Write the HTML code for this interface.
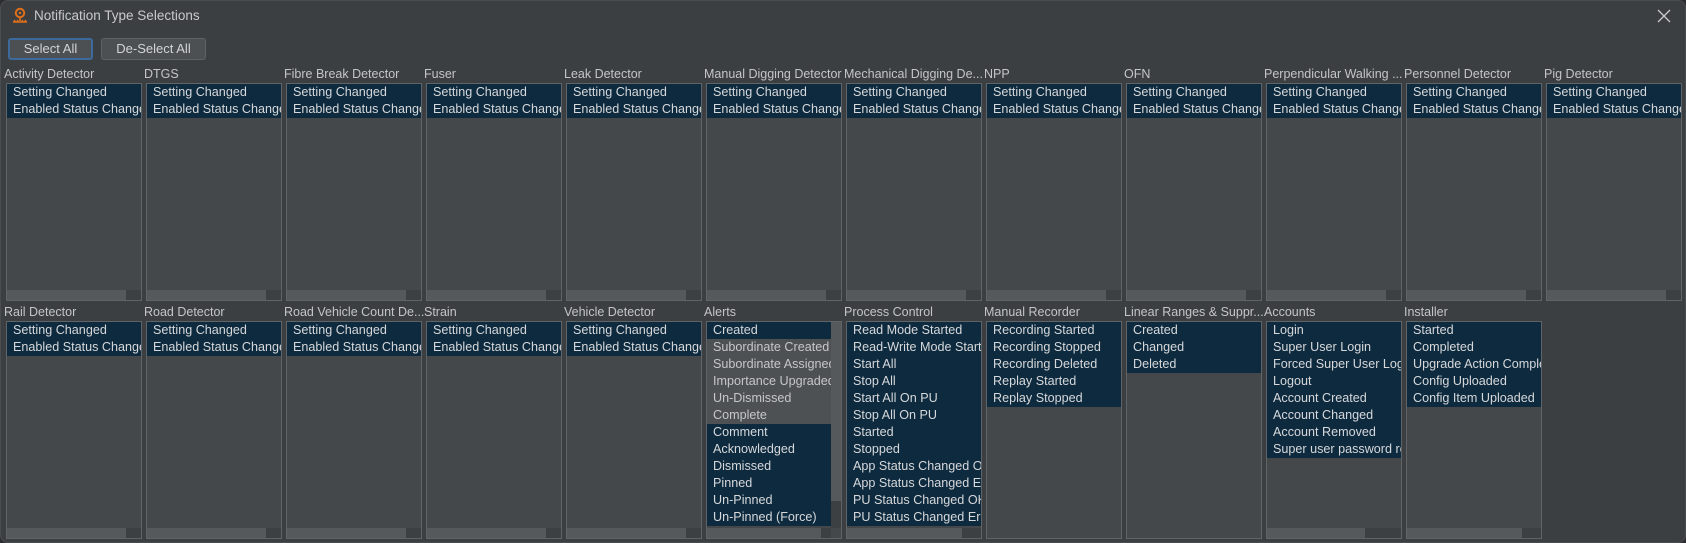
<!DOCTYPE html>
<html><head><meta charset="utf-8"><style>
*{margin:0;padding:0;box-sizing:border-box}
body{width:1686px;height:543px;background:#2b2d30;overflow:hidden;font-family:"Liberation Sans",sans-serif;}
.win{position:absolute;left:0;top:0;width:1686px;height:543px;background:#3c3f41;border:1px solid #4a4d50;border-radius:8px;overflow:hidden}
.title{position:absolute;left:33px;top:7px;font-size:13.5px;color:#c8cacc}
.x{position:absolute;left:1654px;top:6px;width:18px;height:18px}
.btn{position:absolute;top:37px;height:22px;border:1px solid #5e6265;border-radius:3px;background:#4c5052;color:#d2d4d6;font-size:13px;text-align:center;line-height:20px}
.btn.f{border:2px solid #3d6a9c;line-height:18px}
.l{position:absolute;width:142px;font-size:12.5px;color:#c3c5c7;white-space:nowrap;overflow:hidden;text-overflow:ellipsis;height:16px;line-height:16px}
.b{position:absolute;width:136px;height:218px;border:1px solid #616467;background:#45484b;overflow:hidden}
.it{height:17px;line-height:17px;font-size:12.6px;color:#d6d8da;padding-left:6px;white-space:nowrap;background:#0e2a3f;overflow:hidden}
.it.u{background:#4e5154;color:#c5c7c9}
.hs{position:absolute;left:0;bottom:0;height:10px;background:#3d4042;width:100%}
.hs i{display:block;height:10px;background:#55595c}
.vs{position:absolute;right:0;top:0;width:10px;height:206px;background:#3d4042}
.vs i{display:block;width:10px;background:#55595c;height:179px}
</style></head><body><div class="win">
<svg style="position:absolute;left:10px;top:6px" width="18" height="18" viewBox="0 0 18 18"><circle cx="9" cy="6" r="4.2" fill="none" stroke="#e0701a" stroke-width="2"/><circle cx="9" cy="6" r="1.2" fill="#e0701a"/><path d="M9 10v4M2 15h14M3 15l1-2M15 15l-1-2M6 15l1-2M12 15l-1-2" stroke="#e0701a" stroke-width="1.6" fill="none"/></svg>
<div class="title">Notification Type Selections</div>
<svg class="x" viewBox="0 0 18 18"><path d="M3 3L15 15M15 3L3 15" stroke="#c8cacc" stroke-width="1.3"/></svg>
<div class="btn f" style="left:7px;width:85px">Select All</div>
<div class="btn" style="left:100px;width:105px">De-Select All</div>

<div class="l" style="left:3px;top:65px">Activity Detector</div>
<div class="l" style="left:143px;top:65px">DTGS</div>
<div class="l" style="left:283px;top:65px">Fibre Break Detector</div>
<div class="l" style="left:423px;top:65px">Fuser</div>
<div class="l" style="left:563px;top:65px">Leak Detector</div>
<div class="l" style="left:703px;top:65px">Manual Digging Detector</div>
<div class="l" style="left:843px;top:65px">Mechanical Digging De...</div>
<div class="l" style="left:983px;top:65px">NPP</div>
<div class="l" style="left:1123px;top:65px">OFN</div>
<div class="l" style="left:1263px;top:65px">Perpendicular Walking ...</div>
<div class="l" style="left:1403px;top:65px">Personnel Detector</div>
<div class="l" style="left:1543px;top:65px">Pig Detector</div>

<div class="b" style="left:5px;top:82px"><div class="it">Setting Changed</div><div class="it">Enabled Status Changed</div><div class="hs"><i style="width:119px"></i></div></div>
<div class="b" style="left:145px;top:82px"><div class="it">Setting Changed</div><div class="it">Enabled Status Changed</div><div class="hs"><i style="width:119px"></i></div></div>
<div class="b" style="left:285px;top:82px"><div class="it">Setting Changed</div><div class="it">Enabled Status Changed</div><div class="hs"><i style="width:119px"></i></div></div>
<div class="b" style="left:425px;top:82px"><div class="it">Setting Changed</div><div class="it">Enabled Status Changed</div><div class="hs"><i style="width:119px"></i></div></div>
<div class="b" style="left:565px;top:82px"><div class="it">Setting Changed</div><div class="it">Enabled Status Changed</div><div class="hs"><i style="width:119px"></i></div></div>
<div class="b" style="left:705px;top:82px"><div class="it">Setting Changed</div><div class="it">Enabled Status Changed</div><div class="hs"><i style="width:119px"></i></div></div>
<div class="b" style="left:845px;top:82px"><div class="it">Setting Changed</div><div class="it">Enabled Status Changed</div><div class="hs"><i style="width:119px"></i></div></div>
<div class="b" style="left:985px;top:82px"><div class="it">Setting Changed</div><div class="it">Enabled Status Changed</div><div class="hs"><i style="width:119px"></i></div></div>
<div class="b" style="left:1125px;top:82px"><div class="it">Setting Changed</div><div class="it">Enabled Status Changed</div><div class="hs"><i style="width:119px"></i></div></div>
<div class="b" style="left:1265px;top:82px"><div class="it">Setting Changed</div><div class="it">Enabled Status Changed</div><div class="hs"><i style="width:119px"></i></div></div>
<div class="b" style="left:1405px;top:82px"><div class="it">Setting Changed</div><div class="it">Enabled Status Changed</div><div class="hs"><i style="width:119px"></i></div></div>
<div class="b" style="left:1545px;top:82px"><div class="it">Setting Changed</div><div class="it">Enabled Status Changed</div><div class="hs"><i style="width:119px"></i></div></div>

<div class="l" style="left:3px;top:303px">Rail Detector</div>
<div class="l" style="left:143px;top:303px">Road Detector</div>
<div class="l" style="left:283px;top:303px">Road Vehicle Count De...</div>
<div class="l" style="left:423px;top:303px">Strain</div>
<div class="l" style="left:563px;top:303px">Vehicle Detector</div>
<div class="l" style="left:703px;top:303px">Alerts</div>
<div class="l" style="left:843px;top:303px">Process Control</div>
<div class="l" style="left:983px;top:303px">Manual Recorder</div>
<div class="l" style="left:1123px;top:303px">Linear Ranges &amp; Suppr...</div>
<div class="l" style="left:1263px;top:303px">Accounts</div>
<div class="l" style="left:1403px;top:303px">Installer</div>

<div class="b" style="left:5px;top:320px"><div class="it">Setting Changed</div><div class="it">Enabled Status Changed</div><div class="hs"><i style="width:119px"></i></div></div>
<div class="b" style="left:145px;top:320px"><div class="it">Setting Changed</div><div class="it">Enabled Status Changed</div><div class="hs"><i style="width:119px"></i></div></div>
<div class="b" style="left:285px;top:320px"><div class="it">Setting Changed</div><div class="it">Enabled Status Changed</div><div class="hs"><i style="width:119px"></i></div></div>
<div class="b" style="left:425px;top:320px"><div class="it">Setting Changed</div><div class="it">Enabled Status Changed</div><div class="hs"><i style="width:119px"></i></div></div>
<div class="b" style="left:565px;top:320px"><div class="it">Setting Changed</div><div class="it">Enabled Status Changed</div><div class="hs"><i style="width:119px"></i></div></div>
<div class="b" style="left:705px;top:320px"><div style="width:124px"><div class="it">Created</div><div class="it u">Subordinate Created</div><div class="it u">Subordinate Assigned</div><div class="it u">Importance Upgraded</div><div class="it u">Un-Dismissed</div><div class="it u">Complete</div><div class="it">Comment</div><div class="it">Acknowledged</div><div class="it">Dismissed</div><div class="it">Pinned</div><div class="it">Un-Pinned</div><div class="it">Un-Pinned (Force)</div></div><div class="vs"><i></i></div><div class="hs" style="width:124px"><i style="width:114px"></i></div><div style="position:absolute;right:0;bottom:0;width:10px;height:10px;background:#45484b"></div></div>
<div class="b" style="left:845px;top:320px"><div class="it">Read Mode Started</div><div class="it">Read-Write Mode Started</div><div class="it">Start All</div><div class="it">Stop All</div><div class="it">Start All On PU</div><div class="it">Stop All On PU</div><div class="it">Started</div><div class="it">Stopped</div><div class="it">App Status Changed OK</div><div class="it">App Status Changed Error</div><div class="it">PU Status Changed OK</div><div class="it">PU Status Changed Error</div><div class="hs"><i style="width:115px"></i></div></div>
<div class="b" style="left:985px;top:320px"><div class="it">Recording Started</div><div class="it">Recording Stopped</div><div class="it">Recording Deleted</div><div class="it">Replay Started</div><div class="it">Replay Stopped</div></div>
<div class="b" style="left:1125px;top:320px"><div class="it">Created</div><div class="it">Changed</div><div class="it">Deleted</div></div>
<div class="b" style="left:1265px;top:320px"><div class="it">Login</div><div class="it">Super User Login</div><div class="it">Forced Super User Login</div><div class="it">Logout</div><div class="it">Account Created</div><div class="it">Account Changed</div><div class="it">Account Removed</div><div class="it">Super user password reset</div><div class="hs"><i style="width:98px"></i></div></div>
<div class="b" style="left:1405px;top:320px"><div class="it">Started</div><div class="it">Completed</div><div class="it">Upgrade Action Completed</div><div class="it">Config Uploaded</div><div class="it">Config Item Uploaded</div><div class="hs"><i style="width:115px"></i></div></div>
</div></body></html>
